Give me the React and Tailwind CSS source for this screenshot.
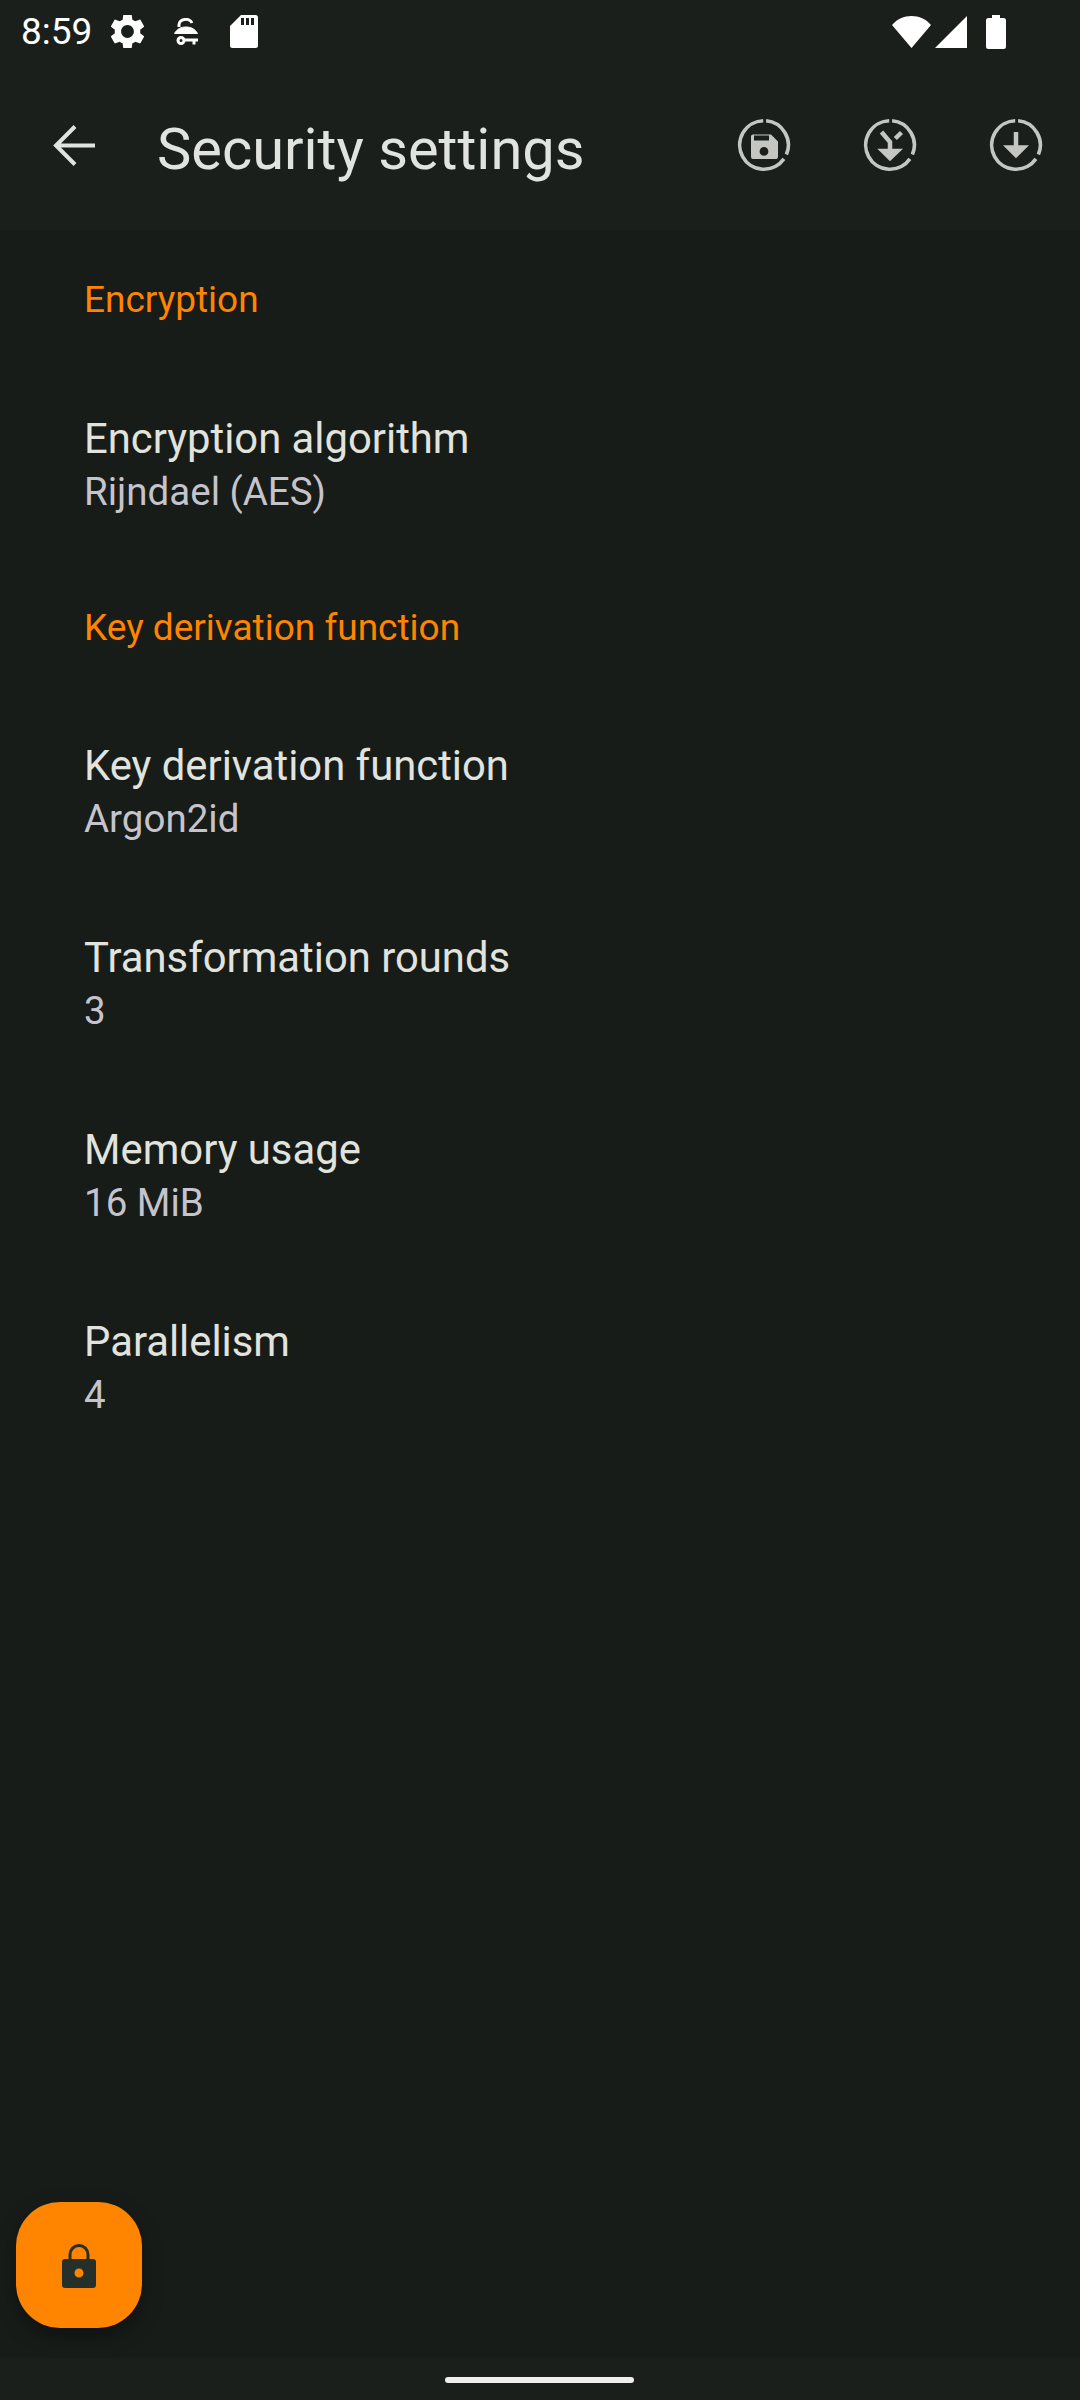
const RING_A = "M30.1 3.8A24.3 24.3 0 0 1 50.4 37.5";
const RING_B = "M47.9 41.9A24.3 24.3 0 1 1 27.2 3.7";

function ProgressIcon({ children }) {
  return (
    <svg viewBox="0 0 56 56" className="w-[56px] h-[56px]" fill="#c4c7c1">
      <path d={RING_A} fill="none" stroke="#c4c7c1" strokeWidth="3.6" />
      <path d={RING_B} fill="none" stroke="#c4c7c1" strokeWidth="3.6" />
      {children}
    </svg>
  );
}

function SaveIcon() {
  return (
    <ProgressIcon>
      <path
        fillRule="evenodd"
        d="M17 17.6H35L42 24.4V40a2 2 0 0 1-2 2H17a2 2 0 0 1-2-2V19.6a2 2 0 0 1 2-2ZM18 18.6V23.6H33V18.6ZM28 30a4.4 4.4 0 1 0 0 8.8 4.4 4.4 0 0 0 0-8.8Z"
      />
    </ProgressIcon>
  );
}

function MergeIcon() {
  return (
    <ProgressIcon>
      <path d="M28 33V25L19.5 15" fill="none" stroke="#c4c7c1" strokeWidth="4.5" />
      <path d="M33.3 21.5L39.5 15.5" fill="none" stroke="#c4c7c1" strokeWidth="4.5" />
      <path d="M15.3 31.7H41L28 44.3Z" />
    </ProgressIcon>
  );
}

function DownloadIcon() {
  return (
    <ProgressIcon>
      <path d="M28 15V30" fill="none" stroke="#c4c7c1" strokeWidth="4.5" />
      <path d="M15 28.3H41L28 41.3Z" />
    </ProgressIcon>
  );
}

function StatusBar() {
  return (
    <div className="h-[66px] flex items-center pl-[21px] text-white">
      <span className="text-[37px] leading-[38px] w-[90px] -mt-[3px]">8:59</span>
      <svg viewBox="2.7 2.7 18.6 18.6" className="w-[33px] h-[33px] -mt-[3px]" fill="#fff">
        <path d="M19.14 12.94c.04-.3.06-.61.06-.94 0-.32-.02-.64-.07-.94l2.03-1.58c.18-.14.23-.41.12-.61l-1.92-3.32c-.12-.22-.37-.29-.59-.22l-2.39.96c-.5-.38-1.03-.7-1.62-.94l-.36-2.54c-.04-.24-.24-.41-.48-.41h-3.84c-.24 0-.43.17-.47.41l-.36 2.54c-.59.24-1.13.57-1.62.94l-2.39-.96c-.22-.08-.47 0-.59.22L2.74 8.87c-.12.21-.08.47.12.61l2.03 1.58c-.05.3-.09.63-.09.94s.02.64.07.94l-2.03 1.58c-.18.14-.23.41-.12.61l1.92 3.32c.12.22.37.29.59.22l2.39-.96c.5.38 1.03.7 1.62.94l.36 2.54c.05.24.24.41.48.41h3.84c.24 0 .44-.17.47-.41l.36-2.54c.59-.24 1.13-.56 1.62-.94l2.39.96c.22.08.47 0 .59-.22l1.92-3.32c.12-.22.07-.47-.12-.61l-2.01-1.58zM12 15.6c-1.98 0-3.6-1.62-3.6-3.6s1.62-3.6 3.6-3.6 3.6 1.62 3.6 3.6-1.62 3.6-3.6 3.6z" />
      </svg>
      <svg viewBox="0 0 24 27" className="w-[24px] h-[27px] ml-[30px] -mt-[3px]" fill="none" stroke="#fff" strokeWidth="3">
        <path d="M5 9V7A6.700 5.500 0 0 1 18 5" />
        <path d="M0.500 15.500C3 11 7 9 12 9S21 11 23.500 15.500Z" fill="#fff" strokeWidth="1" />
        <circle cx="7" cy="22.500" r="3" />
        <path d="M10 22H24M20 22V26.500" />
      </svg>
      <svg viewBox="0 0 28 33" className="w-[28px] h-[33px] ml-[32px] -mt-[3px]" fill="#fff">
        <path
          fillRule="evenodd"
          d="M11 0H25.500A2.500 2.500 0 0 1 28 2.500V30.500A2.500 2.500 0 0 1 25.500 33H2.500A2.500 2.500 0 0 1 0 30.500V11ZM11 3V10H14V3ZM16 3V10H19V3ZM21 3V10H24V3Z"
        />
      </svg>
      <div className="ml-auto flex items-center pr-[74px] -mt-[3px]">
        <svg viewBox="0 0 39 32" className="w-[39px] h-[32px]" fill="#fff">
          <path d="M19.500 32L0 9C5 3 12 0 19.500 0S34 3 39 9Z" />
        </svg>
        <svg viewBox="0 0 32 32" className="w-[32px] h-[32px] ml-[4px]" fill="#fff">
          <path d="M32 0V32H0Z" />
        </svg>
        <svg viewBox="0 0 20 34" className="w-[20px] h-[34px] ml-[19px]" fill="#fff">
          <path d="M6 0H14V3H17.500A2.500 2.500 0 0 1 20 5.500V31.500A2.500 2.500 0 0 1 17.500 34H2.500A2.500 2.500 0 0 1 0 31.500V5.500A2.500 2.500 0 0 1 2.500 3H6Z" />
        </svg>
      </div>
    </div>
  );
}

function Toolbar() {
  return (
    <div className="h-[164px] flex items-center pb-[6px]">
      <div className="w-[157px] pl-[53px] flex items-center">
        <svg viewBox="0 0 42 41" className="w-[42px] h-[41px]" fill="none" stroke="#e1e3de" strokeWidth="4">
          <path d="M42 20.500H3M22 1.500L3 20.500L22 39.500" />
        </svg>
      </div>
      <h1 className="text-[57.750px] leading-[64px] font-normal text-[#e1e3de] flex-1 mt-[8px]">Security settings</h1>
      <div className="flex pr-px">
        <div className="w-[126px] flex justify-center"><SaveIcon /></div>
        <div className="w-[126px] flex justify-center"><MergeIcon /></div>
        <div className="w-[126px] flex justify-center"><DownloadIcon /></div>
      </div>
    </div>
  );
}

function Category({ title, first }) {
  return (
    <div className={`flex items-center pl-[84px] text-[37px] leading-[50px] text-[#ff8400] ${first ? "h-[138px] pt-[2px]" : "h-[135px]"}`}>
      {title}
    </div>
  );
}

function Row({ title, summary }) {
  return (
    <div className="h-[192px] pl-[84px] flex flex-col justify-center">
      <div className="text-[41.800px] leading-[55px] text-[#e1e3de]">{title}</div>
      <div className="text-[38.500px] leading-[52px] text-[#c5c3cc]">{summary}</div>
    </div>
  );
}

export default function App() {
  return (
    <div className="relative h-[2400px] w-[1080px] flex flex-col overflow-hidden bg-[#171c19] font-['Roboto',sans-serif]">
      <div className="bg-[#1a1f1c]">
        <StatusBar />
        <Toolbar />
      </div>

      <div className="flex-1">
        <Category title="Encryption" first />
        <Row title="Encryption algorithm" summary="Rijndael (AES)" />
        <Category title="Key derivation function" />
        <Row title="Key derivation function" summary="Argon2id" />
        <Row title="Transformation rounds" summary="3" />
        <Row title="Memory usage" summary="16 MiB" />
        <Row title="Parallelism" summary="4" />
      </div>

      <div className="h-[42px] bg-[#1a1f1c] flex items-center justify-center">
        <div className="w-[189px] h-[6px] rounded-full bg-[#eff0ee] mt-[2px] -ml-[1px]"></div>
      </div>

      <div className="absolute left-[16px] top-[2202px] w-[126px] h-[126px] rounded-[44px] bg-[#ff8400] shadow-[0_8px_20px_rgba(0,0,0,0.35)] flex items-center justify-center">
        <svg viewBox="0 0 34 45" className="w-[34px] h-[45px]">
          <path
            fill="#25302b"
            fillRule="evenodd"
            d="M6.500 16V11.500A10.500 10.500 0 0 1 27.500 11.500V16H31A3 3 0 0 1 34 19V42A3 3 0 0 1 31 45H3A3 3 0 0 1 0 42V19A3 3 0 0 1 3 16ZM9.500 16H24.500V11.500A7.500 7.500 0 0 0 9.500 11.500ZM17 25.500A4.500 4.500 0 1 0 17 34.500 4.500 4.500 0 0 0 17 25.500Z"
          />
        </svg>
      </div>
    </div>
  );
}
